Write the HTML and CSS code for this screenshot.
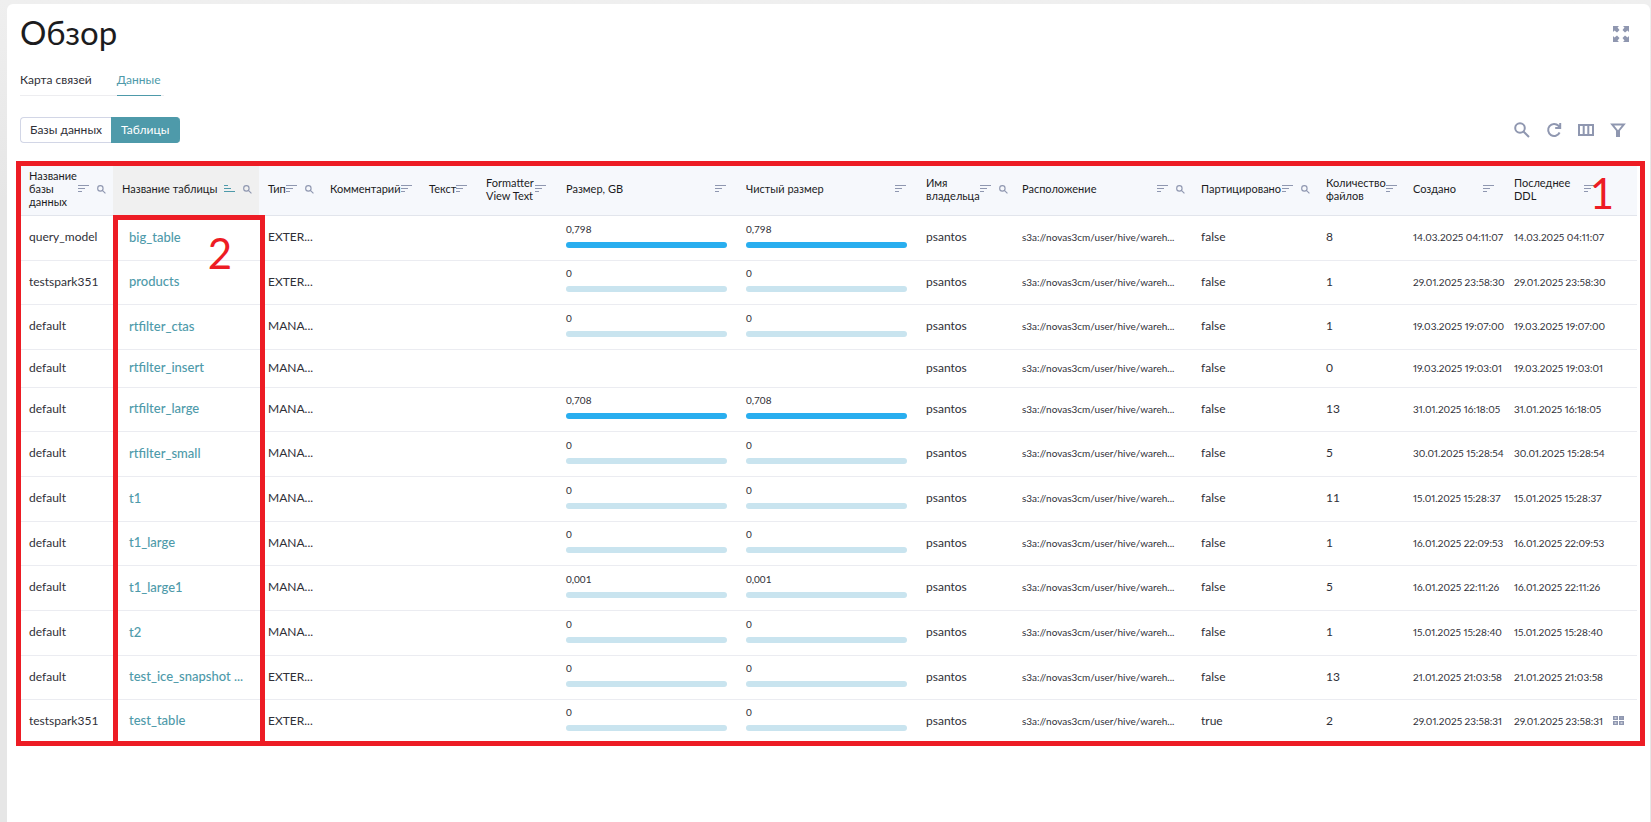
FILE: index.html
```html
<!DOCTYPE html>
<html lang="ru">
<head>
    <meta charset="UTF-8">
    <meta name="viewport" content="width=device-width, initial-scale=1.0">
    <title>Обзор</title>
    <link rel="stylesheet" href="styles.css">
</head>
<body>
    <!-- Shared icons -->
    <svg class="sprite" aria-hidden="true">
        <symbol id="sort" viewBox="0 0 11 8"><path d="M0 .5h11M0 3.5h7M0 6.5h4" /></symbol>
        <symbol id="sort-asc" viewBox="0 0 11 8"><path d="M0 .5h4M0 3.5h7M0 6.5h11" /></symbol>
        <symbol id="search" viewBox="0 0 16 16"><circle cx="6" cy="6" r="4.8" /><path d="M9.5 9.5l5.5 5.5" /></symbol>
    </svg>

    <main class="card">
        <header class="card-header">
            <h1>Обзор</h1>
            <button class="icon-btn" aria-label="На весь экран">
                <svg class="expand" viewBox="0 0 16 16">
                    <path d="M0 0h6L4.500 1.500 6.500 4 4 6.500 1.500 4.500 0 6zM16 0v6l-1.500-1.500L12 6.500 9.500 4l2-2.500L10 0zM0 16v-6l1.500 1.500L4 9.500 6.500 12l-2 2.500L6 16zM16 16h-6l1.500-1.500L9.500 12 12 9.500l2.500 2L16 10z" />
                </svg>
            </button>
        </header>

        <nav class="tabs">
            <a href="#map">Карта связей</a>
            <a href="#data" class="active">Данные</a>
        </nav>

        <div class="toolbar">
            <div class="switch">
                <button>Базы данных</button>
                <button class="active">Таблицы</button>
            </div>
            <div class="actions">
                <button class="icon-btn" aria-label="Поиск"><svg viewBox="0 0 16 16"><use href="#search" /></svg></button>
                <button class="icon-btn" aria-label="Обновить">
                    <svg viewBox="0 0 16 16"><path d="M13.600 10.500A6 6 0 1 1 12.500 3.800L14 5.500M14.200 1v5H9.200" /></svg>
                </button>
                <button class="icon-btn" aria-label="Колонки">
                    <svg viewBox="0 0 16 16"><path d="M1 3h14v10H1zM5.700 3v10M10.300 3v10" /></svg>
                </button>
                <button class="icon-btn" aria-label="Фильтр">
                    <svg viewBox="0 0 16 16"><path d="M2.200 2.500h11.600L9 8.500v5.500H7V8.500z" /></svg>
                </button>
            </div>
        </div>

        <div class="table-wrap">
            <table>
                <colgroup>
                    <col class="c-db"><col class="c-name"><col class="c-type"><col class="c-comment"><col class="c-text">
                    <col class="c-view"><col class="c-size"><col class="c-size"><col class="c-owner"><col class="c-location">
                    <col class="c-part"><col class="c-files"><col class="c-date"><col class="c-date"><col class="c-menu">
                </colgroup>
                <thead>
                    <tr>
                        <th><div class="th"><span>Название базы данных</span><svg class="sort"><use href="#sort" /></svg><svg class="find"><use href="#search" /></svg></div></th>
                        <th class="sorted"><div class="th"><span>Название таблицы</span><svg class="sort"><use href="#sort-asc" /></svg><svg class="find"><use href="#search" /></svg></div></th>
                        <th><div class="th"><span>Тип</span><svg class="sort"><use href="#sort" /></svg><svg class="find"><use href="#search" /></svg></div></th>
                        <th><div class="th last-sort"><span>Комментарий</span><svg class="sort"><use href="#sort" /></svg></div></th>
                        <th><div class="th last-sort"><span>Текст</span><svg class="sort"><use href="#sort" /></svg></div></th>
                        <th><div class="th last-sort"><span>Formatter View Text</span><svg class="sort"><use href="#sort" /></svg></div></th>
                        <th><div class="th last-sort"><span>Размер, GB</span><svg class="sort"><use href="#sort" /></svg></div></th>
                        <th><div class="th last-sort"><span>Чистый размер</span><svg class="sort"><use href="#sort" /></svg></div></th>
                        <th><div class="th"><span>Имя владельца</span><svg class="sort"><use href="#sort" /></svg><svg class="find"><use href="#search" /></svg></div></th>
                        <th><div class="th"><span>Расположение</span><svg class="sort"><use href="#sort" /></svg><svg class="find"><use href="#search" /></svg></div></th>
                        <th><div class="th"><span>Партицировано</span><svg class="sort"><use href="#sort" /></svg><svg class="find"><use href="#search" /></svg></div></th>
                        <th><div class="th last-sort"><span>Количество файлов</span><svg class="sort"><use href="#sort" /></svg></div></th>
                        <th><div class="th last-sort"><span>Создано</span><svg class="sort"><use href="#sort" /></svg></div></th>
                        <th><div class="th last-sort"><span>Последнее DDL</span><svg class="sort"><use href="#sort" /></svg></div></th>
                        <th></th>
                    </tr>
                </thead>
                <tbody>
                    <tr>
                        <td>query_model</td><td><a href="#big_table">big_table</a></td><td>EXTER...</td><td></td><td></td><td></td>
                        <td><div class="size">0,798<i class="full"></i></div></td><td><div class="size">0,798<i class="full"></i></div></td>
                        <td>psantos</td><td class="small">s3a://novas3cm/user/hive/wareh...</td><td>false</td><td>8</td>
                        <td class="small">14.03.2025 04:11:07</td><td class="small">14.03.2025 04:11:07</td><td></td>
                    </tr>
                    <tr>
                        <td>testspark351</td><td><a href="#products">products</a></td><td>EXTER...</td><td></td><td></td><td></td>
                        <td><div class="size">0<i></i></div></td><td><div class="size">0<i></i></div></td>
                        <td>psantos</td><td class="small">s3a://novas3cm/user/hive/wareh...</td><td>false</td><td>1</td>
                        <td class="small">29.01.2025 23:58:30</td><td class="small">29.01.2025 23:58:30</td><td></td>
                    </tr>
                    <tr>
                        <td>default</td><td><a href="#rtfilter_ctas">rtfilter_ctas</a></td><td>MANA...</td><td></td><td></td><td></td>
                        <td><div class="size">0<i></i></div></td><td><div class="size">0<i></i></div></td>
                        <td>psantos</td><td class="small">s3a://novas3cm/user/hive/wareh...</td><td>false</td><td>1</td>
                        <td class="small">19.03.2025 19:07:00</td><td class="small">19.03.2025 19:07:00</td><td></td>
                    </tr>
                    <tr class="no-size">
                        <td>default</td><td><a href="#rtfilter_insert">rtfilter_insert</a></td><td>MANA...</td><td></td><td></td><td></td>
                        <td></td><td></td>
                        <td>psantos</td><td class="small">s3a://novas3cm/user/hive/wareh...</td><td>false</td><td>0</td>
                        <td class="small">19.03.2025 19:03:01</td><td class="small">19.03.2025 19:03:01</td><td></td>
                    </tr>
                    <tr>
                        <td>default</td><td><a href="#rtfilter_large">rtfilter_large</a></td><td>MANA...</td><td></td><td></td><td></td>
                        <td><div class="size">0,708<i class="full"></i></div></td><td><div class="size">0,708<i class="full"></i></div></td>
                        <td>psantos</td><td class="small">s3a://novas3cm/user/hive/wareh...</td><td>false</td><td>13</td>
                        <td class="small">31.01.2025 16:18:05</td><td class="small">31.01.2025 16:18:05</td><td></td>
                    </tr>
                    <tr>
                        <td>default</td><td><a href="#rtfilter_small">rtfilter_small</a></td><td>MANA...</td><td></td><td></td><td></td>
                        <td><div class="size">0<i></i></div></td><td><div class="size">0<i></i></div></td>
                        <td>psantos</td><td class="small">s3a://novas3cm/user/hive/wareh...</td><td>false</td><td>5</td>
                        <td class="small">30.01.2025 15:28:54</td><td class="small">30.01.2025 15:28:54</td><td></td>
                    </tr>
                    <tr>
                        <td>default</td><td><a href="#t1">t1</a></td><td>MANA...</td><td></td><td></td><td></td>
                        <td><div class="size">0<i></i></div></td><td><div class="size">0<i></i></div></td>
                        <td>psantos</td><td class="small">s3a://novas3cm/user/hive/wareh...</td><td>false</td><td>11</td>
                        <td class="small">15.01.2025 15:28:37</td><td class="small">15.01.2025 15:28:37</td><td></td>
                    </tr>
                    <tr>
                        <td>default</td><td><a href="#t1_large">t1_large</a></td><td>MANA...</td><td></td><td></td><td></td>
                        <td><div class="size">0<i></i></div></td><td><div class="size">0<i></i></div></td>
                        <td>psantos</td><td class="small">s3a://novas3cm/user/hive/wareh...</td><td>false</td><td>1</td>
                        <td class="small">16.01.2025 22:09:53</td><td class="small">16.01.2025 22:09:53</td><td></td>
                    </tr>
                    <tr>
                        <td>default</td><td><a href="#t1_large1">t1_large1</a></td><td>MANA...</td><td></td><td></td><td></td>
                        <td><div class="size">0,001<i></i></div></td><td><div class="size">0,001<i></i></div></td>
                        <td>psantos</td><td class="small">s3a://novas3cm/user/hive/wareh...</td><td>false</td><td>5</td>
                        <td class="small">16.01.2025 22:11:26</td><td class="small">16.01.2025 22:11:26</td><td></td>
                    </tr>
                    <tr>
                        <td>default</td><td><a href="#t2">t2</a></td><td>MANA...</td><td></td><td></td><td></td>
                        <td><div class="size">0<i></i></div></td><td><div class="size">0<i></i></div></td>
                        <td>psantos</td><td class="small">s3a://novas3cm/user/hive/wareh...</td><td>false</td><td>1</td>
                        <td class="small">15.01.2025 15:28:40</td><td class="small">15.01.2025 15:28:40</td><td></td>
                    </tr>
                    <tr>
                        <td>default</td><td><a href="#test_ice_snapshot">test_ice_snapshot ...</a></td><td>EXTER...</td><td></td><td></td><td></td>
                        <td><div class="size">0<i></i></div></td><td><div class="size">0<i></i></div></td>
                        <td>psantos</td><td class="small">s3a://novas3cm/user/hive/wareh...</td><td>false</td><td>13</td>
                        <td class="small">21.01.2025 21:03:58</td><td class="small">21.01.2025 21:03:58</td><td></td>
                    </tr>
                    <tr>
                        <td>testspark351</td><td><a href="#test_table">test_table</a></td><td>EXTER...</td><td></td><td></td><td></td>
                        <td><div class="size">0<i></i></div></td><td><div class="size">0<i></i></div></td>
                        <td>psantos</td><td class="small">s3a://novas3cm/user/hive/wareh...</td><td>true</td><td>2</td>
                        <td class="small">29.01.2025 23:58:31</td><td class="small">29.01.2025 23:58:31</td>
                        <td>
                            <button class="icon-btn" aria-label="Партиции">
                                <svg class="grid" viewBox="0 0 11 9"><path d="M.75.75h3.500v2.500H.75zM6.750.75h3.500v2.500h-3.500zM.75 5.750h3.500v2.500H.75zM6.750 5.750h3.500v2.500h-3.500z" /><path d="M6.750 2h3.500" /></svg>
                            </button>
                        </td>
                    </tr>
                </tbody>
            </table>

            <!-- Callouts over the table -->
            <div class="callout callout-table"><b>1</b></div>
            <div class="callout callout-names"><b>2</b></div>
        </div>
    </main>
</body>
</html>
```

FILE: styles.css
```css
* {
    box-sizing: border-box;
}
body {
    margin: 0;
    padding: 4px 1px 0 7px;
    min-height: 100vh;
    display: flex;
    background: linear-gradient(to bottom, #efefef, #e6e6e6 200px);
    font-family: Lato, "Open Sans", sans-serif;
    font-size: 12px;
    color: #303038;
}
button {
    font: inherit;
    color: inherit;
    background: none;
    border: none;
    padding: 0;
    cursor: pointer;
}
a {
    color: inherit;
    text-decoration: none;
}
svg {
    display: block;
    fill: none;
    stroke: #8f97b0;
    flex: none;
}
.sprite {
    position: absolute;
    width: 0;
    height: 0;
}
.card {
    flex: 1;
    min-width: 0;
    padding: 8px 13px;
    background: #fff;
    border-radius: 6px 6px 0 0;
}
.card-header {
    display: flex;
    justify-content: space-between;
    align-items: flex-end;
    padding-right: 8px;
}
h1 {
    margin: 0;
    font-size: 33px;
    line-height: 40px;
    font-weight: 400;
    color: #1c1c1e;
}
.card-header .icon-btn {
    padding-bottom: 10px;
}
.icon-btn svg {
    width: 16px;
    height: 16px;
    stroke-width: 2;
}
.icon-btn .expand {
    fill: #8f97b0;
    stroke: none;
}
.icon-btn .grid {
    width: 11px;
    height: 9px;
    stroke-width: 1.5;
}

/* Tabs */
.tabs {
    display: flex;
    width: fit-content;
    gap: 25px;
    margin-top: 16px;
    padding-right: 3px;
    line-height: 24px;
    box-shadow: inset 0 -1px #ededf0;
}
.tabs a {
    padding-bottom: 4px;
}
.tabs .active {
    color: #4e9aaa;
    box-shadow: inset 0 -1px #4e9aaa;
}

/* Toolbar */
.toolbar {
    display: flex;
    justify-content: space-between;
    align-items: center;
    margin: 21px 0 19px;
    padding-right: 11px;
}
.switch {
    display: flex;
    line-height: 24px;
}
.switch button {
    padding: 0 9px;
    border: 1px solid #d2d6e6;
    border-right: none;
    border-radius: 4px 0 0 4px;
}
.switch .active {
    padding-right: 11px;
    color: #fff;
    background: #4e9aaa;
    border-color: #4e9aaa;
    border-radius: 0 4px 4px 0;
}
.actions {
    display: flex;
    gap: 16px;
}

/* Table */
.table-wrap {
    position: relative;
}
table {
    width: 100%;
    table-layout: fixed;
    border-collapse: separate;
    border-spacing: 0;
}
.c-db { width: 93px; }
.c-name { width: 146px; }
.c-type { width: 62px; }
.c-comment { width: 99px; }
.c-text { width: 57px; }
.c-view { width: 80px; }
.c-size { width: 180px; }
.c-owner { width: 96px; }
.c-location { width: 179px; }
.c-part { width: 125px; }
.c-files { width: 87px; }
.c-date { width: 101px; }
.c-menu { width: 31px; }
th {
    height: 54px;
    padding: 0 7px 0 9px;
    background: #f6f8fc;
    border-bottom: 1px solid #e2e5ec;
    text-align: left;
    font-size: 11px;
    line-height: 13px;
    font-weight: 400;
    color: #1c1c1e;
}
.sorted {
    background: #f0f0f0;
}
.th {
    display: flex;
    align-items: center;
}
.th span {
    flex: 1;
}
.last-sort {
    padding-right: 4px;
}
.sort {
    width: 11px;
    height: 8px;
}
.sorted .sort {
    stroke: #4e9aaa;
}
.find {
    width: 9px;
    height: 9px;
    margin: 1px 0 0 8px;
    stroke-width: 2;
}
td {
    height: 45px;
    padding: 0 0 2px 9px;
    border-bottom: 1px solid #ebecf1;
    line-height: 16px;
    white-space: nowrap;
}
tbody tr:nth-child(3n+2) td {
    height: 44px;
}
tbody .no-size td {
    height: 38px;
}
tbody tr:last-child td {
    height: 43px;
    border-bottom: none;
}
td a {
    padding-left: 7px;
    font-size: 13px;
    font-weight: 500;
    color: #4e9aaa;
}
td.small {
    font-size: 10px;
    font-variant-numeric: proportional-nums;
}
.size {
    margin-right: 10px;
    padding-bottom: 4px;
    font-size: 10px;
    line-height: 12px;
}
.size i {
    display: block;
    height: 6px;
    margin-top: 7px;
    border-radius: 3px;
    background: #c9e4ef;
}
.size .full {
    background: #29aeef;
}
td:last-child {
    padding-left: 7px;
}

/* Callouts */
.callout {
    position: absolute;
    border: 5px solid #ed1c24;
    pointer-events: none;
}
.callout b {
    position: absolute;
    font-size: 42px;
    line-height: 42px;
    font-weight: 400;
    color: #ed1c24;
}
.callout-table {
    top: -1px;
    right: -8px;
    bottom: -3px;
    left: -4px;
}
.callout-table b {
    top: 6px;
    right: 26px;
}
.callout-names {
    top: 53px;
    bottom: -3px;
    left: calc(100% * 93 / 1617);
    width: calc(100% * 152 / 1617);
}
.callout-names b {
    top: 12px;
    right: 28px;
}
```
